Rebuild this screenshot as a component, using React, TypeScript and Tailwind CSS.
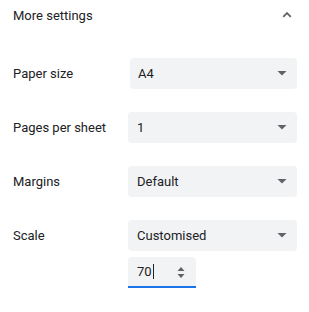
import React from "react";

function Arrow() {
  return (
    <svg width="10" height="5" viewBox="0 0 10 5" className="shrink-0">
      <path d="M0.5 0 L9.5 0 L5 4.5 Z" fill="#5f6368" />
    </svg>
  );
}

function Row({ label, value, shift = false, mt }: { label: string; value: string; shift?: boolean; mt: string }) {
  return (
    <div className={`flex items-center ${mt}`}>
      <div className="w-[115px] shrink-0 text-[13px] text-[#202124]">{label}</div>
      <div
        className={`flex h-[31px] flex-1 items-center justify-between rounded-[4px] bg-[#f1f3f4] pr-[10px] text-[13px] text-[#202124] ${
          shift ? "ml-[2px] pl-[8px]" : "pl-[9px]"
        }`}
      >
        <span>{value}</span>
        <Arrow />
      </div>
    </div>
  );
}

export default function App() {
  return (
    <div
      className="h-[312px] w-[309px] bg-white pl-[13px] pr-[12px]"
      style={{ fontFamily: "Roboto, 'Noto Sans', sans-serif" }}
    >
      <div className="flex h-[32px] items-center justify-between">
        <span className="text-[13px] text-[#202124]">More settings</span>
        <svg width="12" height="8" viewBox="0 0 12 8" className="mr-[4px]">
          <path d="M2.2 4.9 L6 1.1 L9.8 4.9" fill="none" stroke="#5f6368" strokeWidth="1.8" />
        </svg>
      </div>
      <Row label="Paper size" value="A4" shift mt="mt-[26px]" />
      <Row label="Pages per sheet" value="1" mt="mt-[23px]" />
      <Row label="Margins" value="Default" mt="mt-[23px]" />
      <Row label="Scale" value="Customised" mt="mt-[23px]" />
      <div className="mt-[6px] flex">
        <div className="w-[115px] shrink-0" />
        <div className="flex h-[31px] w-[68px] items-center justify-between rounded-t-[4px] border-b-2 border-[#1a73e8] bg-[#f1f3f4] pl-[9px] pr-[11px] text-[13px] text-[#202124]">
          <span className="flex items-center">
            70<span className="ml-[1px] inline-block h-[15px] w-[1px] bg-[#202124]" />
          </span>
          <svg width="8" height="13" viewBox="0 0 8 13" className="mt-[1px]">
            <path d="M0.5 5 L4 1 L7.5 5 Z" fill="#5f6368" />
            <path d="M0.5 8 L4 12 L7.5 8 Z" fill="#5f6368" />
          </svg>
        </div>
      </div>
    </div>
  );
}
